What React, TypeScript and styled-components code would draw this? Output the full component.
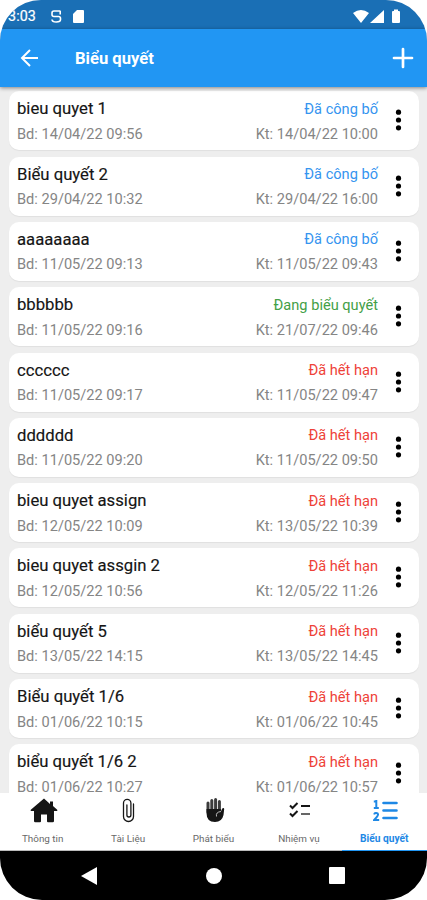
import React from "react";
import styled, { createGlobalStyle } from "styled-components";

const Global = createGlobalStyle`
  * { box-sizing: border-box; }
  body { margin: 0; background: #fff; font-family: Roboto, "Liberation Sans", sans-serif; }
  svg { display: block; }
`;

const Phone = styled.div`
  width: 427px;
  height: 900px;
  display: flex;
  flex-direction: column;
  overflow: hidden;
  border-radius: 41px 41px 42px 42px;
  background: #eeeeee;
`;

const StatusBar = styled.header`
  flex: 0 0 29px;
  display: flex;
  align-items: center;
  padding: 3px 27px 0 8px;
  background: #1a6fb5;
  color: #fff;
  font-size: 14.3px;
`;

const Clock = styled.span`
  width: 42px;
  letter-spacing: 0.1px;
  -webkit-text-stroke: 0.2px;
`;

const StatusIcons = styled.div<{ $end?: boolean }>`
  display: flex;
  align-items: center;
  margin-left: ${(p) => (p.$end ? "auto" : "0")};
`;

const AppBar = styled.div`
  flex: 0 0 58px;
  display: flex;
  align-items: center;
  padding: 0 13px 0 20px;
  background: #2196f3;
  color: #fff;
  box-shadow: 0 1px 4px rgba(0, 0, 0, 0.45);
  z-index: 1;
`;

const Title = styled.h1`
  flex: 1;
  margin: 1px 0 0 36px;
  font-size: 16.6px;
  font-weight: 700;
  line-height: 20px;
`;

const IconButton = styled.button`
  border: 0;
  padding: 0;
  background: none;
  color: inherit;
`;

const List = styled.main`
  flex: 1;
  min-height: 0;
  overflow: hidden;
  display: flex;
  flex-direction: column;
  gap: 6.3px;
  padding: 4.4px 8px 0 9px;
`;

const Card = styled.article`
  flex: 0 0 59px;
  display: flex;
  align-items: center;
  padding: 0 17px 0 8px;
  border-radius: 10px;
  background: #fff;
  box-shadow: 0 1px 1px rgba(0, 0, 0, 0.06);
`;

const CardText = styled.div`
  flex: 1;
  display: flex;
  flex-direction: column;
  gap: 5px;
  padding-top: 1px;
`;

const Line = styled.div`
  display: flex;
  justify-content: space-between;
  height: 20px;
  line-height: 20px;
  white-space: nowrap;
`;

const Name = styled.span`
  padding-top: 0.5px;
  color: #151515;
  font-size: 16.7px;
  -webkit-text-stroke: 0.15px;
`;

const Status = styled.span<{ $color: string }>`
  color: ${(p) => p.$color};
  font-size: 14.6px;
`;

const Time = styled.span`
  color: #858585;
  font-size: 14.6px;
`;

const Menu = styled(IconButton)`
  margin: 0 0 1px 17px;
  color: #000;
`;

const Tabs = styled.nav`
  flex: 0 0 58px;
  display: grid;
  grid-template-columns: repeat(5, 1fr);
  background: #fff;
`;

const Tab = styled.div<{ $active?: boolean }>`
  display: flex;
  flex-direction: column;
  align-items: center;
  justify-content: space-between;
  padding: 2px 0 4px;
  border-bottom: 1px solid ${(p) => (p.$active ? "#2196f3" : "#bbb")};
  color: ${(p) => (p.$active ? "#1e88e5" : "#151515")};
`;

const TabIcon = styled.div`
  height: 30px;
  display: flex;
  align-items: center;
  padding-left: 3px;
`;

const TabLabel = styled.span<{ $active?: boolean }>`
  color: ${(p) => (p.$active ? "#1e88e5" : "#686868")};
  font-size: ${(p) => (p.$active ? "10.2px" : "9.9px")};
  font-weight: ${(p) => (p.$active ? 700 : 400)};
  line-height: 14px;
`;

const SystemBar = styled.footer`
  flex: 0 0 49px;
  display: flex;
  align-items: center;
  justify-content: space-between;
  padding: 0 82px 0 81px;
  background: #000;
`;

const PUBLISHED = { text: "Đã công bố", color: "#3594ef" };
const ACTIVE = { text: "Đang biểu quyết", color: "#43a047" };
const EXPIRED = { text: "Đã hết hạn", color: "#ee4238" };

const votes = [
  { name: "bieu quyet 1", status: PUBLISHED, start: "14/04/22 09:56", end: "14/04/22 10:00" },
  { name: "Biểu quyết 2", status: PUBLISHED, start: "29/04/22 10:32", end: "29/04/22 16:00" },
  { name: "aaaaaaaa", status: PUBLISHED, start: "11/05/22 09:13", end: "11/05/22 09:43" },
  { name: "bbbbbb", status: ACTIVE, start: "11/05/22 09:16", end: "21/07/22 09:46" },
  { name: "cccccc", status: EXPIRED, start: "11/05/22 09:17", end: "11/05/22 09:47" },
  { name: "dddddd", status: EXPIRED, start: "11/05/22 09:20", end: "11/05/22 09:50" },
  { name: "bieu quyet assign", status: EXPIRED, start: "12/05/22 10:09", end: "13/05/22 10:39" },
  { name: "bieu quyet assgin 2", status: EXPIRED, start: "12/05/22 10:56", end: "12/05/22 11:26" },
  { name: "biểu quyết 5", status: EXPIRED, start: "13/05/22 14:15", end: "13/05/22 14:45" },
  { name: "Biểu quyết 1/6", status: EXPIRED, start: "01/06/22 10:15", end: "01/06/22 10:45" },
  { name: "biểu quyết 1/6 2", status: EXPIRED, start: "01/06/22 10:27", end: "01/06/22 10:57" },
];

const HomeIcon = () => (
  <svg width="28" height="26" viewBox="0 0 28 26" fill="currentColor">
    <path d="M14 1.500.8 12.700Q0 14 1.500 14H4v10q0 1.300 1.300 1.300H10q1 0 1-1V17.500h6v6.800q0 1 1 1h4.700Q24 25.300 24 24V14h2.500q1.500 0 .7-1.300L23 9V4.500h-3V7z" />
  </svg>
);

const ClipIcon = () => (
  <svg width="16" height="25" viewBox="1 0 16 25" fill="none" stroke="currentColor" strokeWidth="1.3" strokeLinecap="round">
    <path d="M12.500 6v12.500a5 5 0 0 1-10 0V5a3.700 3.700 0 0 1 7.400 0v12a2 2 0 0 1-4 0V7" />
  </svg>
);

const HandIcon = () => (
  <svg width="20" height="26" viewBox="0 0 20 26">
    <path d="M3 6v9M6.800 3.500V15M10.600 2.500V15M14.400 4.500V15" stroke="#3c3c3c" strokeWidth="3" strokeLinecap="round" />
    <path d="M1.500 12h14.400v2.500l1.300-3q1.800-1.300 2 .5L18.500 18q-1.500 7-8.500 7-8.500 0-8.500-9z" fill="currentColor" />
    <path d="M16 14.500q-5.500.5-4.500 5" stroke="#ccc" strokeWidth=".9" fill="none" />
  </svg>
);

const TasksIcon = () => (
  <svg width="22" height="18" viewBox="0 0 22 18" fill="none" stroke="currentColor" strokeWidth="2">
    <path d="m1 4.500 2.500 2.500L8.500 2M1 12.500 3.500 15l5-5" />
    <path d="M12 5h9" />
    <path d="M12 13h9" stroke="#666" />
  </svg>
);

const NumberedIcon = () => (
  <svg width="25" height="24" viewBox="0 0 25 24" fill="none" stroke="currentColor" strokeWidth="2">
    <path d="M10.500 5h13M10.500 12.500h13M10.500 20h13" strokeWidth="2.600" strokeLinecap="round" />
    <path d="M.8 3.500h2.500V2v8M.8 10h5M1.200 16.500q.5-2 2.300-1.500c2.500.5 1.500 2.800-.3 4.700L1.200 22h5" />
  </svg>
);

const tabs = [
  { label: "Thông tin", icon: <HomeIcon /> },
  { label: "Tài Liệu", icon: <ClipIcon /> },
  { label: "Phát biểu", icon: <HandIcon /> },
  { label: "Nhiệm vụ", icon: <TasksIcon /> },
  { label: "Biểu quyết", icon: <NumberedIcon />, active: true },
];

export default function App() {
  return (
    <>
      <Global />
      <Phone>
        <StatusBar>
          <Clock>3:03</Clock>
          <StatusIcons>
            <svg width="36" height="15" viewBox="0 0 36 15" fill="none" stroke="#fff" strokeWidth="1.600">
              <path d="M10.500 2H4Q2 2 2 4v1.500Q2 7.500 4 7.500h4.500q2 0 2 2v1q0 2.500-4.200 2.500T2 10.500M10.200 2v3.500" />
              <path d="M27 1h6q1 0 1 1v11q0 1-1 1h-9q-1 0-1-1V5z" fill="#fff" stroke="none" />
            </svg>
          </StatusIcons>
          <StatusIcons $end>
            <svg width="47" height="15" viewBox="0 0 47 15" fill="#fff">
              <path d="M0 4q8-6 16 0L8 14zM31 1v13H17zM41 .5h4v1.500h1q1 0 1 1v10q0 1-1 1h-6q-1 0-1-1V3q0-1 1-1h1z" />
            </svg>
          </StatusIcons>
        </StatusBar>
        <AppBar>
          <IconButton aria-label="Back">
            <svg width="19" height="18" viewBox="0 0 19 18" fill="none" stroke="currentColor" strokeWidth="2">
              <path d="M18 9H2M10 1 2 9l8 8" />
            </svg>
          </IconButton>
          <Title>Biểu quyết</Title>
          <IconButton aria-label="Add">
            <svg width="22" height="22" viewBox="0 0 22 22" stroke="currentColor" strokeWidth="2.700" strokeLinecap="round">
              <path d="M11 2v18M2 11h18" />
            </svg>
          </IconButton>
        </AppBar>
        <List>
          {votes.map((v) => (
            <Card key={v.name}>
              <CardText>
                <Line>
                  <Name>{v.name}</Name>
                  <Status $color={v.status.color}>{v.status.text}</Status>
                </Line>
                <Line>
                  <Time>Bd: {v.start}</Time>
                  <Time>Kt: {v.end}</Time>
                </Line>
              </CardText>
              <Menu aria-label="Options">
                <svg width="7" height="22" viewBox="0 0 7 22" fill="currentColor">
                  <circle cx="3.500" cy="3.200" r="2.600" />
                  <circle cx="3.500" cy="11" r="2.600" />
                  <circle cx="3.500" cy="18.800" r="2.600" />
                </svg>
              </Menu>
            </Card>
          ))}
        </List>
        <Tabs>
          {tabs.map((t) => (
            <Tab key={t.label} $active={t.active}>
              <TabIcon>{t.icon}</TabIcon>
              <TabLabel $active={t.active}>{t.label}</TabLabel>
            </Tab>
          ))}
        </Tabs>
        <SystemBar>
          <svg width="16" height="18" viewBox="0 0 16 18" fill="#fff">
            <path d="M16 0v18L0 9z" />
          </svg>
          <svg width="17" height="16" viewBox="0 0 17 16" fill="#fff">
            <circle cx="9" cy="8" r="8" />
          </svg>
          <svg width="16" height="17" viewBox="0 0 16 17" fill="#fff">
            <rect width="16" height="17" rx="1" />
          </svg>
        </SystemBar>
      </Phone>
    </>
  );
}
